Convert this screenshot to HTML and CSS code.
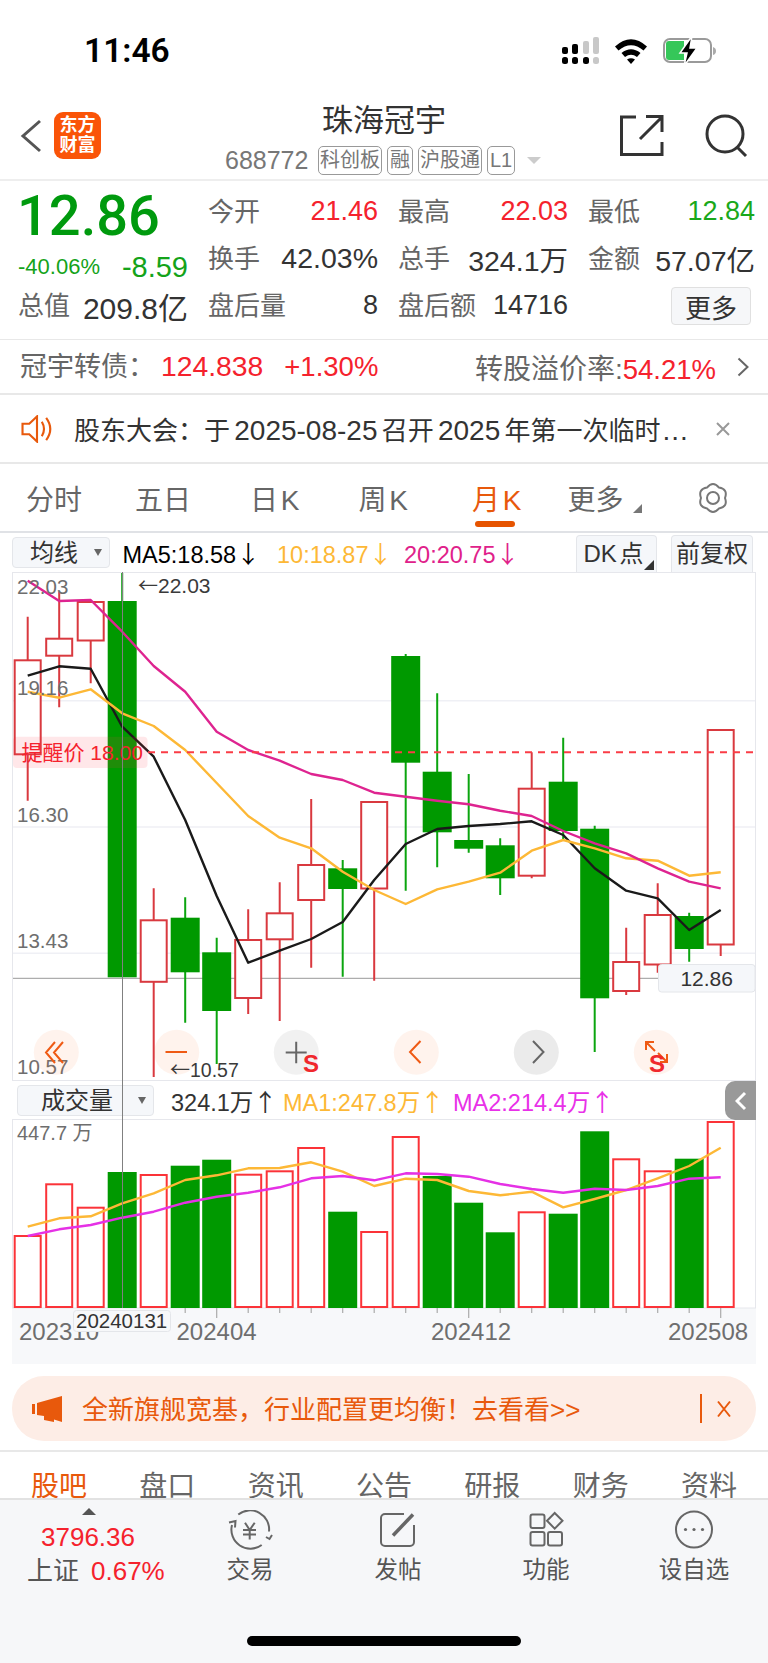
FILE: index.html
```html
<!DOCTYPE html>
<html lang="zh">
<head>
<meta charset="utf-8">
<title>珠海冠宇</title>
<link rel="stylesheet" href="styles.css">
</head>
<body>
<div class="phone">
  <header class="status">
    <div class="time">11:46</div>
    <svg class="status-icons" width="160" height="34" viewBox="560 34 160 34">
      <g class="ico-black">
        <rect x="562" y="47" width="6" height="7" rx="2"/><rect x="572" y="44" width="6" height="10" rx="2"/>
        <rect x="562" y="57" width="6" height="7" rx="2.5"/><rect x="572" y="57" width="6" height="7" rx="2.5"/><rect x="583" y="57" width="6" height="7" rx="2.5"/>
      </g>
      <g class="ico-grey">
        <rect x="583" y="41" width="6" height="13" rx="2"/><rect x="593" y="37" width="6" height="17" rx="2"/><rect x="593" y="57" width="6" height="7" rx="2.5"/>
      </g>
      <path class="wifi" d="M615 46.5 Q631 32 647 46.5 L643.5 50.5 Q631 40 618.5 50.5Z M621.5 53 Q631 45.5 640.5 53 L637 57 Q631 52.5 625 57Z M627 59.5 Q631 57 635 59.5 L631 64Z"/>
      <rect class="batt" x="664" y="39" width="47" height="23" rx="6"/>
      <path class="batt-nub" d="M713 47 q3 1 3 4 t-3 4z"/>
      <path class="batt-fill" d="M666 44 a3 3 0 0 1 3-3 H684 V60 H669 a3 3 0 0 1-3-3Z"/>
      <path class="bolt" d="M692 36 L680 53 H687 L684 66 L697 48 H690Z"/>
    </svg>
  </header>

  <nav class="nav">
    <div class="nav-left">
      <svg class="nav-back" width="24" height="36" viewBox="0 0 24 36"><path d="M21 3 L4 18 L21 33"/></svg>
      <div class="logo"><span>东方</span><span>财富</span></div>
    </div>
    <div class="nav-title">
      <div class="stock-name">珠海冠宇</div>
      <div class="stock-sub">
        <span class="code">688772</span>
        <span class="tag tag-3">科创板</span><span class="tag">融</span><span class="tag tag-3">沪股通</span><span class="tag tag-l">L1</span>
        <span class="tag-arrow"></span>
      </div>
    </div>
    <svg class="nav-icons" width="136" height="44" viewBox="618 114 136 44">
      <path d="M636 117 H621.5 V154.5 H662 V142 M640 139 L661.5 117.5 M646 116.5 H662 V132"/>
      <circle cx="725" cy="134" r="18"/><path d="M737 147 L746 156"/>
    </svg>
  </nav>

  <section class="quote">
    <div class="price-block">
      <div class="price">12.86</div>
      <div class="price-sub"><span class="pct">-40.06%</span><span class="chg">-8.59</span></div>
    </div>
    <div class="cell"><span class="lab">今开</span><span class="num red">21.46</span></div>
    <div class="cell"><span class="lab">最高</span><span class="num red">22.03</span></div>
    <div class="cell"><span class="lab">最低</span><span class="num green">12.84</span></div>
    <div class="cell"><span class="lab">换手</span><span class="num unit">42.03%</span></div>
    <div class="cell"><span class="lab">总手</span><span class="num unit">324.1万</span></div>
    <div class="cell"><span class="lab">金额</span><span class="num unit">57.07亿</span></div>
    <div class="cell"><span class="lab">总值</span><span class="num unit-l">209.8亿</span></div>
    <div class="cell"><span class="lab">盘后量</span><span class="num">8</span></div>
    <div class="cell"><span class="lab">盘后额</span><span class="num">14716</span></div>
    <div class="cell cell-end"><button class="more-btn">更多</button></div>
  </section>

  <section class="bond">
    <span class="lab bond-name">冠宇转债：</span>
    <span class="num red bond-price">124.838</span>
    <span class="num red bond-pct">+1.30%</span>
    <span class="bond-right"><span class="lab">转股溢价率:</span><span class="num red bond-rate">54.21%</span></span>
    <svg class="chev" width="12" height="20" viewBox="0 0 12 20"><path d="M1.5 1.5 L10.5 10 L1.5 18.5"/></svg>
  </section>

  <section class="notice">
    <svg class="notice-ico" width="34" height="28" viewBox="20 414 34 29"><path d="M22 423 H29 L37 415.5 V441.5 L29 434 H22Z M42 421 Q46.5 428.5 42 436 M46.5 417 Q55 428.5 46.5 440"/></svg>
    <span class="notice-text">股东大会：于 <span class="d">2025-08-25</span> 召开 <span class="d">2025</span> 年第一次临时<span class="d dots">...</span></span>
    <svg class="notice-x" width="16" height="16" viewBox="0 0 16 16"><path d="M2 2 L14 14 M14 2 L2 14"/></svg>
  </section>

  <section class="tabs">
    <span class="tab t1">分时</span>
    <span class="tab t2">五日</span>
    <span class="tab t3">日 K</span>
    <span class="tab t4">周 K</span>
    <span class="tab t5 active">月 K</span>
    <span class="tab t6">更多<i class="corner"></i></span>
    <svg class="gear" width="34" height="34" viewBox="-17 -17 34 34"><path d="M-6 -10.4 Q0 -17.5 6 -10.4 Q15.2 -8.75 12 0 Q15.2 8.75 6 10.4 Q0 17.5 -6 10.4 Q-15.2 8.75 -12 0 Q-15.2 -8.75 -6 -10.4Z"/><circle r="6"/></svg>
  </section>

  <div class="chart">
    <div class="crosshair"></div>
    <div class="bar bar-main">
      <div class="select select-ma"><span>均线</span><i class="tri"></i></div>
      <span class="ma ma-a">MA5:18.58<span class="arr">↓</span></span>
      <span class="ma ma-b">10:18.87<span class="arr">↓</span></span>
      <span class="ma ma-c">20:20.75<span class="arr">↓</span></span>
      <div class="btn btn-dk">DK 点<i class="corner dark"></i></div>
      <div class="btn btn-fq">前复权</div>
    </div>

    <svg class="kline" width="768" height="509" viewBox="0 572 768 509">
      <rect class="frame" x="12.5" y="572.5" width="743" height="508"/>
      <path class="grid" d="M13 700.7H755 M13 827H755 M13 953.3H755"/>
      <path class="hline" d="M13 978.3H658"/>
      <g class="wick-r">
        <path d="M27.7 616.7V800.7 M59.2 591.7V707.3 M90.7 641V683.3 M153.7 888.3V1077 M248.2 909.3V1014 M279.7 882.3V1021 M311.2 799V967.7 M374.2 889V980.7 M531.7 752.3V878.3 M626.2 927.7V995 M657.7 883.3V972.7 M720.7 945V956"/>
      </g>
      <g class="wick-g">
        <path d="M122.2 573V601 M185.2 897.3V1022.7 M216.7 937.7V1064 M342.7 860V976.7 M405.7 654V890.7 M437.2 693.3V867.3 M468.7 774V852.7 M500.2 838.3V895 M563.2 737.7V840 M594.7 825.7V1052 M689.2 912.7V961.7"/>
      </g>
      <g class="body-r">
        <rect x="14.7" y="660.3" width="26" height="94"/>
        <rect x="46.2" y="638.7" width="26" height="17"/>
        <rect x="77.7" y="602" width="26" height="38.5"/>
        <rect x="140.7" y="920.3" width="26" height="61.5"/>
        <rect x="235.2" y="940" width="26" height="58"/>
        <rect x="266.7" y="913.3" width="26" height="26"/>
        <rect x="298.2" y="865" width="26" height="35"/>
        <rect x="361.2" y="802" width="26" height="86.5"/>
        <rect x="518.7" y="788.7" width="26" height="87"/>
        <rect x="613.2" y="962" width="26" height="29"/>
        <rect x="644.7" y="915" width="26" height="49.5"/>
        <rect x="707.7" y="730" width="26" height="214.5"/>
      </g>
      <g class="body-g">
        <rect x="107.7" y="601" width="29" height="376.3"/>
        <rect x="170.7" y="917.7" width="29" height="54.6"/>
        <rect x="202.2" y="952.3" width="29" height="58.7"/>
        <rect x="328.2" y="868.3" width="29" height="20.7"/>
        <rect x="391.2" y="656" width="29" height="106.7"/>
        <rect x="422.7" y="771.7" width="29" height="60.6"/>
        <rect x="454.2" y="840" width="29" height="8.7"/>
        <rect x="485.7" y="845.3" width="29" height="33"/>
        <rect x="548.7" y="781.7" width="29" height="49.3"/>
        <rect x="580.2" y="828.7" width="29" height="169.6"/>
        <rect x="674.7" y="916" width="29" height="33"/>
      </g>
      <polyline class="ma-black" points="27.7,675.7 59.2,666.3 90.7,668.7 122.2,726.7 153.7,756.7 185.2,820 216.7,896 248.2,962.7 279.7,950.7 311.2,939 342.7,922 374.2,880 405.7,844 437.2,829 468.7,826 500.2,824 531.7,821.3 563.2,835 594.7,868.3 626.2,890.7 657.7,898.3 689.2,930 720.7,910"/>
      <polyline class="ma-orange" points="27.7,691.7 59.2,697.7 90.7,689.3 122.2,713.3 153.7,726 185.2,750 216.7,783 248.2,816 279.7,837.7 311.2,848.3 342.7,871.7 374.2,890 405.7,904 437.2,889.3 468.7,881.7 500.2,872.7 531.7,850.7 563.2,840 594.7,848.3 626.2,858.3 657.7,860.7 689.2,875.7 720.7,872.3"/>
      <polyline class="ma-pink" points="27.7,580.7 59.2,601 90.7,600 122.2,631.7 153.7,666 185.2,691.7 216.7,731.7 248.2,750 279.7,760.7 311.2,774 342.7,780 374.2,792.7 405.7,796.7 437.2,800.7 468.7,804.3 500.2,810.7 531.7,816 563.2,831 594.7,843.3 626.2,853.3 657.7,868.3 689.2,881.7 720.7,888.3"/>
      <g class="lbl">
        <text x="17" y="594">22.03</text>
        <text x="17" y="695">19.16</text>
        <text x="17" y="822">16.30</text>
        <text x="17" y="948">13.43</text>
        <text x="17" y="1074">10.57</text>
      </g>
      <path class="dash" d="M148 752.3H755"/>
      <rect class="alert-bg" x="13" y="736.7" width="134.5" height="31.3" rx="4"/>
      <text class="alert" x="21.5" y="760">提醒价 18.00</text>
      <text class="extreme" x="138" y="593"><tspan class="x-arr">←</tspan>22.03</text>
      <rect class="last-box" x="658.5" y="964.5" width="96.5" height="27.5" rx="3"/>
      <text class="last" x="706.7" y="985.5">12.86</text>
      <g class="cir-o"><circle cx="56.3" cy="1052.3" r="22.5"/><circle cx="176.7" cy="1052.3" r="22.5"/><circle cx="416.3" cy="1052.3" r="22.5"/><circle cx="656.3" cy="1052.3" r="22.5"/></g>
      <g class="cir-g"><circle cx="296.3" cy="1052.3" r="22.5"/><circle class="cir-d" cx="536.3" cy="1052.3" r="22.5"/></g>
      <path class="ic-o" d="M55 1042 L46 1052.5 L55 1063 M63 1042 L54 1052.5 L63 1063 M165.5 1052H187 M420.5 1041 L410 1052 L420.5 1063 M646 1050 V1042 H654 M646 1042 L655 1051 M660 1062 H667 V1054 M667 1062 L658 1053"/>
      <path class="ic-g" d="M285.7 1052.5H306.7 M296.2 1041.7V1063.3 M533 1041 L543.5 1052 L533 1063"/>
      <text class="s-mark" x="303" y="1072">S</text>
      <text class="s-mark" x="649" y="1072">S</text>
      <text class="extreme low" x="170" y="1077"><tspan class="x-arr">←</tspan>10.57</text>
    </svg>

    <div class="bar bar-vol">
      <div class="select select-vol"><span>成交量</span><i class="tri"></i></div>
      <span class="ma ma-v">324.1万<span class="arr">↑</span></span>
      <span class="ma ma-b ma-b2">MA1:247.8万<span class="arr">↑</span></span>
      <span class="ma ma-m">MA2:214.4万<span class="arr">↑</span></span>
      <div class="side-tab"><svg width="12" height="20" viewBox="0 0 12 20"><path d="M10 2 L2 10 L10 18"/></svg></div>
    </div>

    <svg class="vol" width="768" height="245" viewBox="0 1119 768 245">
      <rect class="strip" x="12" y="1308" width="744" height="56"/>
      <rect class="frame" x="12.5" y="1119.5" width="743" height="188.5"/>
      <path class="tick" d="M185.2 1308V1313 M216.7 1308V1318 M248.2 1308V1313 M279.7 1308V1313 M311.2 1308V1313 M342.7 1308V1313 M374.2 1308V1313 M405.7 1308V1313 M437.2 1308V1313 M468.7 1308V1318 M500.2 1308V1313 M531.7 1308V1313 M563.2 1308V1313 M594.7 1308V1313 M626.2 1308V1313 M657.7 1308V1313 M689.2 1308V1313 M720.7 1308V1318"/>
      <text class="lbl-v" x="17" y="1140">447.7 万</text>
      <g class="vbar-r">
        <rect x="14.7" y="1236" width="26" height="71"/>
        <rect x="46.2" y="1184.3" width="26" height="122.7"/>
        <rect x="77.7" y="1207.7" width="26" height="99.3"/>
        <rect x="140.7" y="1175" width="26" height="132"/>
        <rect x="235.2" y="1174.7" width="26" height="132.3"/>
        <rect x="266.7" y="1171.3" width="26" height="135.7"/>
        <rect x="298.2" y="1148" width="26" height="159"/>
        <rect x="361.2" y="1232" width="26" height="75"/>
        <rect x="392.7" y="1137" width="26" height="170"/>
        <rect x="518.7" y="1212.3" width="26" height="94.7"/>
        <rect x="613.2" y="1159.3" width="26" height="147.7"/>
        <rect x="644.7" y="1171.3" width="26" height="135.7"/>
        <rect x="707.7" y="1122" width="26" height="185"/>
      </g>
      <g class="vbar-g">
        <rect x="107.7" y="1172" width="29" height="136"/>
        <rect x="170.7" y="1165.7" width="29" height="142.3"/>
        <rect x="202.2" y="1159.7" width="29" height="148.3"/>
        <rect x="328.2" y="1211.7" width="29" height="96.3"/>
        <rect x="422.7" y="1176" width="29" height="132"/>
        <rect x="454.2" y="1202.7" width="29" height="105.3"/>
        <rect x="485.7" y="1232.3" width="29" height="75.7"/>
        <rect x="548.7" y="1213.7" width="29" height="94.3"/>
        <rect x="580.2" y="1131.3" width="29" height="176.7"/>
        <rect x="674.7" y="1158.7" width="29" height="149.3"/>
      </g>
      <polyline class="ma-orange" points="27.7,1226.7 59.2,1218.3 90.7,1216.3 122.2,1203.3 153.7,1193.3 185.2,1180 216.7,1175.3 248.2,1168.3 279.7,1168 311.2,1162.3 342.7,1171.7 374.2,1186 405.7,1178.7 437.2,1180 468.7,1191 500.2,1195.3 531.7,1191.7 563.2,1207.3 594.7,1199 626.2,1190 657.7,1178.3 689.2,1166 720.7,1147.7"/>
      <polyline class="ma-magenta" points="27.7,1236 59.2,1229.3 90.7,1225 122.2,1217.7 153.7,1211.7 185.2,1202.7 216.7,1196.7 248.2,1192.7 279.7,1187.3 311.2,1178.3 342.7,1176 374.2,1180.3 405.7,1173.3 437.2,1174 468.7,1176.7 500.2,1184 531.7,1189 563.2,1192.7 594.7,1188.7 626.2,1190 657.7,1186 689.2,1178.7 720.7,1177.3"/>
      <text class="date" x="19" y="1340">202310</text>
      <rect class="date-tip" x="73.5" y="1310.5" width="97" height="21" rx="3"/>
      <text class="date-dark" x="76" y="1328">20240131</text>
      <text class="date" x="176.5" y="1340">202404</text>
      <text class="date" x="431" y="1340">202412</text>
      <text class="date" x="668" y="1340">202508</text>
    </svg>
  </div>

  <section class="promo">
    <div class="promo-box">
      <svg class="promo-ico" width="32" height="28" viewBox="31 1395 32 28"><path d="M32 1404 h3 v10 h-3z M37 1403 L62 1396 V1422 L54 1419.5 L54 1422 L44 1420 L44 1416 L37 1415Z"/></svg>
      <span class="promo-text">全新旗舰宽基，行业配置更均衡！去看看&gt;&gt;</span>
      <i class="promo-sep"></i>
      <svg class="promo-x" width="16" height="18" viewBox="0 0 16 18"><path d="M2 1.5 L14 16.5 M14 1.5 L2 16.5"/></svg>
    </div>
  </section>

  <section class="subtabs">
    <span class="active">股吧</span><span>盘口</span><span>资讯</span><span>公告</span><span>研报</span><span>财务</span><span>资料</span>
  </section>

  <footer class="foot">
    <div class="foot-row">
      <div class="index">
        <i class="index-up"></i>
        <div class="index-val">3796.36</div>
        <div class="index-row"><span>上证</span><span class="index-pct">0.67%</span></div>
      </div>
      <div class="foot-item">
        <svg width="46" height="40" viewBox="228 1510 46 40"><path d="M239.3 1514.5 A19 19 0 0 1 270 1531.5 M267 1537 L270.5 1539 L273 1535 M262.7 1545 A19 19 0 0 1 233 1525 M230 1522.5 L236.5 1521 L236 1527.5 M246 1522.7 L250.7 1530 L255.7 1522.7 M244 1530 H257 M244 1534.5 H257 M250.7 1530 V1539.5"/></svg>
        <span>交易</span>
      </div>
      <div class="foot-item">
        <svg width="46" height="40" viewBox="376 1510 46 40"><path d="M405 1514 H386 a4 4 0 0 0-4 4 V1542 a4 4 0 0 0 4 4 H411 a4 4 0 0 0 4-4 V1525"/><path class="pen" d="M394 1535.5 L414 1514.5"/></svg>
        <span>发帖</span>
      </div>
      <div class="foot-item">
        <svg width="46" height="40" viewBox="524 1510 46 40"><rect x="531.5" y="1514.5" width="14" height="13.5" rx="2"/><rect x="531.5" y="1532" width="14" height="13.5" rx="2"/><rect x="549" y="1532" width="14" height="13.5" rx="2"/><path d="M555.7 1513 L563.5 1520.8 L555.7 1528.6 L548 1520.8Z"/></svg>
        <span>功能</span>
      </div>
      <div class="foot-item">
        <svg width="46" height="40" viewBox="671 1510 46 40"><circle cx="694" cy="1529.5" r="18"/><circle class="dot" cx="685.5" cy="1529.5" r="1.6"/><circle class="dot" cx="694" cy="1529.5" r="1.6"/><circle class="dot" cx="702.5" cy="1529.5" r="1.6"/></svg>
        <span>设自选</span>
      </div>
    </div>
    <i class="home"></i>
  </footer>
</div>
</body>
</html>
```

FILE: styles.css
```css
* { box-sizing: border-box; }
html, body { margin: 0; padding: 0; background: #fff; }
.phone {
  width: 768px; height: 1663px; overflow: hidden; background: #fff;
  font-family: "Liberation Sans", "Noto Sans CJK SC", sans-serif; color: #333;
}
i { display: block; font-style: normal; }

/* status bar */
.status { height: 91px; display: flex; justify-content: space-between; }
.time { margin: 33px 0 0 84px; font-family: Roboto, "Liberation Sans", sans-serif; font-size: 33.5px; line-height: 36px; font-weight: 600; color: #000; }
.status-icons { margin: 34px 48px 0 0; }
.ico-black, .wifi, .bolt { fill: #000; }
.ico-grey { fill: #c8c8c8; }
.batt { fill: #fff; stroke: #9a9a9a; stroke-width: 2; }
.batt-nub { fill: #aaa; }
.batt-fill { fill: #35c759; }
.bolt { stroke: #fff; stroke-width: 1.5; }

/* nav */
.nav { height: 90px; border-bottom: 2px solid #eee; display: grid; grid-template-columns: 150px 1fr 150px; }
.nav-left { display: flex; align-items: flex-start; }
.nav-back { margin: 27px 0 0 19px; fill: none; stroke: #555; stroke-width: 3; }
.logo {
  width: 47px; height: 47px; margin: 21px 0 0 11px; border-radius: 9px; background: #fa5408; color: #fff;
  font-size: 18px; line-height: 20px; font-weight: 700; text-align: center; padding-top: 3px;
  display: flex; flex-direction: column;
}
.nav-title { padding-top: 10px; display: flex; flex-direction: column; align-items: center; }
.stock-name { font-size: 31px; line-height: 40px; color: #333; }
.stock-sub { display: flex; align-items: center; height: 30px; margin: 4px 2px 0 0; flex-wrap: nowrap; white-space: nowrap; }
.code { font-size: 25px; color: #777; width: 93px; text-align: left; }
.tag {
  height: 29px; width: 26px; margin-right: 5px; border: 1px solid #999; border-radius: 5px; font-size: 20px;
  line-height: 27px; color: #777; text-align: center;
}
.tag-l { width: 28px; }
.tag-3 { width: 64px; }
.tag-arrow { width: 0; height: 0; margin: 0 0 0 7px; border-style: solid; border-width: 7px 7px 0; border-color: #ccc transparent transparent; }
.nav-icons { margin: 23px 0 0 0; fill: none; stroke: #333; stroke-width: 3; }

/* quote */
.quote {
  height: 159px; border-bottom: 1px solid #e8e8e8; padding: 7px 0 0 18px;
  display: grid; grid-template-columns: repeat(3, 170px) 167px; grid-auto-rows: 47px; column-gap: 20px;
}
.price-block { grid-row: 1 / 3; }
.price { font-family: Roboto, "Liberation Sans", sans-serif; font-size: 56px; line-height: 56px; font-weight: 500; color: #009a0e; margin-left: -1px; }
.price-sub { display: flex; justify-content: space-between; align-items: flex-end; margin-top: 8px; color: #14a31a; }
.pct { font-size: 22px; line-height: 24px; padding-bottom: 3px; }
.chg { font-size: 29px; line-height: 30px; }
.cell { display: flex; justify-content: space-between; align-items: center; }
.cell-end { justify-content: flex-end; }
.lab { font-size: 26px; color: #666; margin-top: -4px; }
.num { font-size: 27px; color: #333; }
.unit { font-size: 28.5px; }
.unit-l { font-size: 30px; }
.red { color: #f5222d; }
.green { color: #1aa81a; }
.more-btn {
  width: 80px; height: 38px; margin-right: 4px; padding: 0; border: 1px solid #e0e0e0; border-radius: 4px; background: #f6f7f9;
  font: inherit; font-size: 26px; color: #333;
}

/* bond */
.bond { height: 55px; border-bottom: 2px solid #e8e8e8; display: flex; align-items: center; padding-left: 20px; }
.bond .lab { font-size: 27px; }
.bond-right .lab { font-size: 28px; }
.bond .num { font-size: 28.3px; }
.bond-name { width: 141px; }
.bond .bond-pct { margin-left: 21px; font-size: 27.5px; }
.bond .bond-rate { font-size: 27.5px; }
.bond-right { margin-left: auto; }
.chev { margin: 0 19px 0 21px; fill: none; stroke: #666; stroke-width: 2; }

/* notice */
.notice { height: 69px; border-bottom: 2px solid #e8e8e8; display: flex; align-items: center; padding-left: 20px; }
.notice-ico { fill: none; stroke: #e8590c; stroke-width: 2.2; }
.notice-text { margin-left: 20px; width: 639px; font-size: 26px; white-space: nowrap; color: #333; word-spacing: -3px; }
.d { font-size: 28px; }
.dots { letter-spacing: 1px; margin-left: 2px; }
.notice-x { margin-left: 2px; fill: none; stroke: #999; stroke-width: 2; }

/* tabs */
.tabs { height: 69px; border-bottom: 2px solid #e0e2e6; display: flex; align-items: center; font-size: 28px; color: #666; padding-top: 1px; }
.tab { position: relative; word-spacing: -5px; white-space: nowrap; }
.t1 { margin-left: 26px; }
.t2 { margin-left: 53px; }
.t3 { margin-left: 59px; }
.t4 { margin-left: 59px; }
.t5 { margin-left: 64px; }
.t6 { margin-left: 46px; }
.tab.active { color: #e8590c; }
.tab.active::after { content: ""; position: absolute; left: 3px; right: 6px; bottom: -9px; height: 6px; border-radius: 3px; background: #e65400; }
.corner { position: absolute; right: -19px; bottom: 5px; width: 0; height: 0; border-style: solid; border-width: 0 0 9px 9px; border-color: transparent transparent #777 transparent; }
.gear { margin-left: auto; margin-right: 38px; fill: none; stroke: #777; stroke-width: 2; stroke-linejoin: round; }

/* chart */
.chart { position: relative; }
.crosshair { position: absolute; left: 122px; top: 39px; width: 1px; height: 736px; background: #808080; z-index: 2; }
.kline, .vol { display: block; }
.bar { display: flex; align-items: center; }
.bar-main { height: 39px; padding-left: 12px; }
.bar-vol { height: 38px; padding-left: 17px; }
.select {
  position: relative; flex: none; height: 31px; background: #f5f7fa; border: 1px solid #e4e6ea; border-radius: 4px;
  font-size: 24px; line-height: 29px; color: #333;
}
.select-ma { width: 98px; padding-left: 17px; }
.select-vol { width: 137px; padding-left: 23px; }
.tri { position: absolute; right: 7px; top: 11px; width: 0; height: 0; border-style: solid; border-width: 7px 4px 0; border-color: #666 transparent transparent; }
.ma { flex: none; font-size: 23.5px; white-space: nowrap; }
.arr { font-family: "Noto Sans CJK SC", sans-serif; font-size: 24px; }
.ma-a { margin-left: 12.5px; width: 154.5px; color: #000; }
.ma-b { width: 127px; color: #fdb836; }
.ma-c { width: 172px; color: #e0218a; }
.ma-v { margin-left: 17px; width: 112px; color: #333; }
.ma-b2 { width: 170px; }
.ma-m { width: 272px; color: #e831e8; }
.btn {
  position: relative; align-self: flex-end; flex: none; height: 37px; background: #f5f7fa; border: 1px solid #e4e6ea; border-bottom: 0; border-radius: 4px 4px 0 0;
  font-size: 24px; line-height: 35px; text-align: center; color: #333;
}
.btn-dk { width: 81px; word-spacing: -4px; padding-right: 6px; }
.btn-fq { width: 82px; margin-left: 14px; }
.corner.dark { right: 2px; bottom: 2px; border-width: 0 0 10px 10px; border-bottom-color: #333; }
.side-tab { position: relative; z-index: 1; flex: none; align-self: flex-start; width: 31px; height: 39px; background: #999; border-radius: 10px 0 0 10px; display: flex; align-items: center; justify-content: center; }
.side-tab svg { fill: none; stroke: #fff; stroke-width: 3; }

.frame { fill: none; stroke: #e6e7ec; stroke-width: 1; }
.grid { stroke: #eff0f5; stroke-width: 1.5; fill: none; }
.hline { stroke: #999; stroke-width: 1; fill: none; }
.lbl { font-size: 20.5px; fill: #6e6e6e; }
.lbl-v { font-size: 20px; fill: #6e6e6e; }
.wick-r { stroke: #d9393f; stroke-width: 2; fill: none; }
.wick-g { stroke: #0ba50f; stroke-width: 2; fill: none; }
.body-r { fill: #fff; stroke: #d9393f; stroke-width: 2; }
.body-g { fill: #009900; stroke: none; }
polyline { fill: none; stroke-width: 2.4; stroke-linejoin: round; }
.ma-black { stroke: #1a1a1a; }
.ma-orange { stroke: #fdb836; }
.ma-pink { stroke: #de2490; }
.ma-magenta { stroke: #e531e5; }
.dash { stroke: #fa3c46; stroke-width: 2; stroke-dasharray: 7 6; fill: none; }
.alert-bg { fill: rgba(255, 60, 70, 0.12); }
.alert { font-size: 21px; fill: #f5222d; }
.extreme { font-size: 21px; fill: #3a3a3a; }
.extreme.low { font-size: 19.5px; }
.x-arr { font-family: "Noto Sans CJK SC", sans-serif; font-size: 20px; }
.last-box { fill: #f5f7fa; stroke: #e4e6ea; }
.last { font-size: 21px; fill: #333; text-anchor: middle; }
.cir-o circle { fill: rgba(250, 100, 30, 0.08); }
.cir-g circle { fill: rgba(120, 120, 120, 0.1); }
.cir-g .cir-d { fill: rgba(90, 90, 90, 0.12); }
.ic-o { fill: none; stroke: #ef5a14; stroke-width: 2; }
.ic-g { fill: none; stroke: #666; stroke-width: 2; }
.s-mark { font-size: 24px; font-weight: 700; fill: #f0282d; }
.strip { fill: #f7f8fa; }
.tick { stroke: #aaa; stroke-width: 1.2; fill: none; }
.vbar-r { fill: #fff; stroke: #fb3338; stroke-width: 2; }
.vbar-g { fill: #009900; }
.date { font-size: 24px; fill: #6e6e6e; }
.date-dark { font-size: 20.5px; fill: #333; }
.date-tip { fill: #f7f8fa; stroke: #e4e6ea; }

/* promo */
.promo { height: 88px; padding: 12px 12px 0; border-bottom: 2px solid #e8e8e8; }
.promo-box { height: 65px; border-radius: 32px; background: #fdede6; display: flex; align-items: center; padding-left: 19px; }
.promo-ico { flex: none; fill: #e8590c; }
.promo-text { margin: -3px 0 0 19px; width: 618px; font-size: 26px; color: #e8590c; white-space: nowrap; }
.promo-sep { flex: none; width: 1.5px; height: 29px; background: #e8590c; }
.promo-x { flex: none; margin-left: 14px; fill: none; stroke: #e8590c; stroke-width: 2; }

/* sub tabs */
.subtabs { height: 46px; display: flex; justify-content: space-between; padding: 20px 31px 0; font-size: 28px; line-height: 30px; color: #666; overflow: hidden; }
.subtabs .active { color: #e8590c; }

/* footer */
.foot { height: 165px; background: #f6f7f9; border-top: 2px solid #e2e2e2; }
.foot-row { display: flex; height: 136px; padding-top: 10px; }
.index { width: 176px; flex: none; position: relative; }
.index-up { position: absolute; left: 82px; top: -2px; width: 0; height: 0; border-style: solid; border-width: 0 7px 7px; border-color: transparent transparent #555 transparent; }
.index-val { margin: 14px 0 0 41px; font-size: 26px; line-height: 26px; color: #f5222d; }
.index-row { display: flex; gap: 12px; margin: 6px 0 0 27px; font-size: 26px; line-height: 30px; color: #555; }
.index-pct { color: #f5222d; }
.foot-item { flex: none; width: 148px; display: flex; flex-direction: column; align-items: center; font-size: 23.5px; line-height: 28px; color: #555; }
.foot-item span { margin-top: 6px; }
.foot-item svg { fill: none; stroke: #666; stroke-width: 2; }
.foot-item .pen { stroke-width: 3.5; }
.foot-item .dot { fill: #666; stroke: none; }
.home { margin-left: 247px; width: 274px; height: 10px; border-radius: 5px; background: #000; }
```
